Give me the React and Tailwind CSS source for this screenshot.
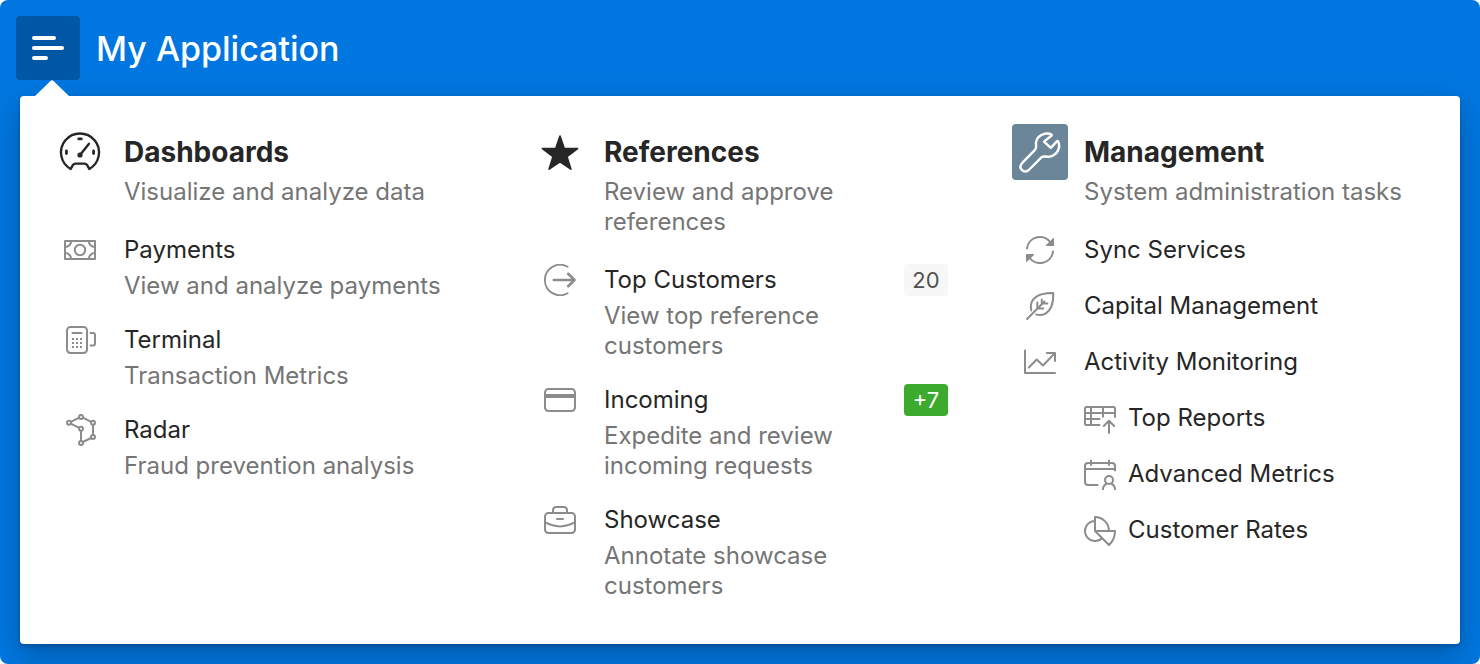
const glyphs = {
  gauge: (
    <>
      <path d="M18.7 45 A19 19 0 1 1 37.3 45 L35.2 41.2 Q34.2 39.6 32.4 39.6 H23.6 Q21.8 39.6 20.8 41.2 Z" strokeWidth="2.4" />
      <path d="M28 31 L37 19.8" strokeWidth="2.4" />
      <circle cx="28" cy="31" r="2.6" fill="currentColor" stroke="none" />
      <path d="M26.7 14.9 H29.3 M14.4 27 V29.6 M41.6 27 V29.6" strokeWidth="2.8" />
    </>
  ),
  star: (
    <path
      d="M28 12 L32.2 24.2 L45.6 24.6 L35 32.5 L38.9 45.2 L28 37.8 L17.1 45.2 L21 32.5 L10.4 24.6 L23.8 24.2 Z"
      fill="currentColor"
      strokeWidth="1.6"
    />
  ),
  wrench: (
    <path
      d="M39.6 10.6 C34.5 7.8 25 11 24 18.5 C23.8 21.5 25 23.6 23 25.8 L10 39.2 C5.6 44.4 12.2 50.2 16.8 46 L29.4 33.4 C31.6 31.4 34 33 37 32.7 C44.5 31.8 49.2 24.4 46.2 17.4 C45.8 16.8 45.2 16.8 44.8 17.4 L38.8 23.9 L32 17.6 L39.4 11.8 Q40 11.2 39.6 10.6 Z"
      strokeWidth="2.4"
    />
  ),
  cash: (
    <>
      <path d="M1 7 H31 V25 H1 Z" />
      <circle cx="16" cy="16" r="5.2" />
      <path d="M7.2 7 A6 6 0 0 1 1 13 M24.8 7 A6 6 0 0 0 31 13 M7.2 25 A6 6 0 0 0 1 19 M24.8 25 A6 6 0 0 1 31 19" />
    </>
  ),
  terminal: (
    <>
      <rect x="3" y="3" width="20" height="26" rx="3.4" />
      <path d="M8.5 9 H17.5 M26.5 9 H29 Q31 9 31 11 V19.5 Q31 21.5 29 21.5 H26.5" />
      <path d="M8 15 H18 M8 19 H18 M8 23 H18" strokeDasharray="2 2" strokeLinecap="butt" />
    </>
  ),
  radar: (
    <>
      <path d="M6.8 7.8 L15.2 3.6 M18.8 3.6 L27.2 7.8 M29 10.7 V21 M27.2 24 L18.8 28 M17 27 V16.7 M15.2 13.8 L6.8 9.6" />
      {[[5, 8.7], [17, 2.9], [29, 8.7], [29, 23], [17, 29], [17, 14.7]].map(([x, y]) => (
        <circle key={`${x}-${y}`} cx={x} cy={y} r="2" />
      ))}
    </>
  ),
  exit: (
    <>
      <path d="M23.6 2.8 A15.2 15.2 0 1 0 23.6 29.2" strokeWidth="1.8" />
      <path d="M9.8 16 H29.5 M24.2 9.8 L30.5 16 L24.2 22.2" strokeWidth="2.6" />
    </>
  ),
  card: (
    <>
      <rect x="1" y="5" width="30" height="22" rx="3.4" />
      <path d="M1 12 H31" strokeWidth="4" strokeLinecap="butt" />
    </>
  ),
  briefcase: (
    <>
      <rect x="1" y="9" width="30" height="20" rx="3.4" />
      <path d="M9 9 V6.4 Q9 3 12.4 3 H19.6 Q23 3 23 6.4 V9 M13 15 H19 M1 18.2 Q16 26.6 31 18.2" />
    </>
  ),
  sync: (
    <>
      <path d="M3 14.4 A13.1 13.1 0 0 1 27 9 M29 17.6 A13.1 13.1 0 0 1 5 23" />
      <path d="M29.4 4.6 V11.5 H22.5 Z M2.6 27.4 V20.5 H9.5 Z" fill="currentColor" strokeWidth="1.2" />
    </>
  ),
  leaf: (
    <path d="M3 29 L20.5 11.5 M7.3 20.4 C5 10 12 2.8 29.2 3 C29.6 13 28 20 21 23.8 C18 25.2 15 25.2 12.2 24.4 M13.3 12.5 V18.6 H19.3 M17.8 9.5 V13.6 H23.4" />
  ),
  trend: (
    <path d="M1 4.5 V27 H31 M4.8 21.5 L12.7 13.5 L19 19.5 L30.6 7.4 M22.8 7 H31 V15" />
  ),
  tableUp: (
    <path d="M31 15 V6.5 Q31 5 29.5 5 H2.5 Q1 5 1 6.5 V21.5 Q1 23 2.5 23 H15.5 M1 11 H31 M1 17 H15.5 M7 5 V23 M19 5 V14.8 M25 31 V19 M19.8 24 L25 18.8 L30.2 24" />
  ),
  calendarUser: (
    <>
      <path d="M13.5 27 H4 Q1 27 1 24 V8 Q1 5 4 5 H28 Q31 5 31 8 V12.5 M1 11 H31 M7 2.5 V7 M25 2.5 V7" />
      <circle cx="25" cy="22" r="4" />
      <path d="M19 31.2 Q19 28 22.3 25.6 M31 31.2 Q31 28 27.7 25.6" />
    </>
  ),
  pie: (
    <path d="M11 17 V3 A14 14 0 0 1 25 17 H11 M11 7 A10 10 0 1 0 18.2 24 M11 17 H31 Q31 25.5 25 31 Z" />
  ),
};

const columns = [
  {
    title: "Dashboards",
    icon: "gauge",
    description: "Visualize and analyze data",
    items: [
      { title: "Payments", icon: "cash", description: "View and analyze payments" },
      { title: "Terminal", icon: "terminal", description: "Transaction Metrics" },
      { title: "Radar", icon: "radar", description: "Fraud prevention analysis" },
    ],
  },
  {
    title: "References",
    icon: "star",
    description: "Review and approve references",
    badges: true,
    items: [
      { title: "Top Customers", icon: "exit", description: "View top reference customers", badge: "20", badgeClass: "bg-[#f7f7f7] text-[#525252]" },
      { title: "Incoming", icon: "card", description: "Expedite and review incoming requests", badge: "+7", badgeClass: "bg-[#3caa2d] text-white" },
      { title: "Showcase", icon: "briefcase", description: "Annotate showcase customers" },
    ],
  },
  {
    title: "Management",
    icon: "wrench",
    iconClass: "rounded bg-[#6b8699] text-white",
    description: "System administration tasks",
    items: [
      { title: "Sync Services", icon: "sync" },
      { title: "Capital Management", icon: "leaf" },
      {
        title: "Activity Monitoring",
        icon: "trend",
        children: [
          { title: "Top Reports", icon: "tableUp" },
          { title: "Advanced Metrics", icon: "calendarUser" },
          { title: "Customer Rates", icon: "pie" },
        ],
      },
    ],
  },
];

function Icon({ name, size = 32 }) {
  return (
    <svg
      width={size}
      height={size}
      viewBox={`0 0 ${size} ${size}`}
      fill="none"
      stroke="currentColor"
      strokeWidth="2"
      strokeLinecap="round"
      strokeLinejoin="round"
      aria-hidden="true"
    >
      {glyphs[name]}
    </svg>
  );
}

function MenuItem({ item, reserveBadge }) {
  return (
    <li>
      <a href="#" className="flex min-h-14 gap-4 pt-3 pb-[11px]">
        <span className="flex h-8 w-14 shrink-0 justify-center text-[#8c8c8c]">
          <Icon name={item.icon} />
        </span>
        <span className="min-w-0 flex-1">
          <span className="block leading-8">{item.title}</span>
          {item.description && (
            <span className="mt-[5px] block leading-[30px] text-[#757575]">{item.description}</span>
          )}
        </span>
        {reserveBadge && (
          <span className="w-11 shrink-0">
            {item.badge && (
              <span className={`block h-8 rounded text-center text-[22px] leading-8 ${item.badgeClass}`}>{item.badge}</span>
            )}
          </span>
        )}
      </a>
      {item.children && (
        <ul className="pl-[72px]">
          {item.children.map((child) => (
            <li key={child.title}>
              <a href="#" className="flex gap-3 py-3 leading-8">
                <span className="shrink-0 text-[#8c8c8c]">
                  <Icon name={child.icon} />
                </span>
                {child.title}
              </a>
            </li>
          ))}
        </ul>
      )}
    </li>
  );
}

function MenuColumn({ column }) {
  return (
    <section className="px-8">
      <a href="#" className="flex gap-4 pb-[15px]">
        <span className={`size-14 shrink-0 ${column.iconClass || ""}`}>
          <Icon name={column.icon} size={56} />
        </span>
        <span className="min-w-0 flex-1 pt-3">
          <span className="block text-[28px] leading-8 font-bold">{column.title}</span>
          <span className="mt-[9px] block leading-[30px] text-[#757575]">{column.description}</span>
        </span>
        {column.badges && <span className="w-11 shrink-0" />}
      </a>
      <ul>
        {column.items.map((item) => (
          <MenuItem key={item.title} item={item} reserveBadge={column.badges} />
        ))}
      </ul>
    </section>
  );
}

export default function App() {
  return (
    <div className="bg-white font-['Inter',sans-serif]">
      <div className="rounded-lg bg-[#0077e0] px-5 pb-5">
        <header className="-ml-1 flex h-24 items-center gap-4">
          <button
            type="button"
            aria-label="Menu"
            aria-expanded="true"
            className="relative flex size-16 items-center justify-center rounded bg-[#0057a6] text-white"
          >
            <svg width="32" height="32" viewBox="0 0 32 32" stroke="currentColor" strokeWidth="4" strokeLinecap="round" aria-hidden="true">
              <path d="M2 6 H22 M2 16 H30 M2 26 H14" />
            </svg>
            <svg className="absolute top-16 left-[18px]" width="36" height="17" viewBox="0 0 36 17" fill="currentColor" aria-hidden="true">
              <path d="M1 17 V16 L16.5 0.9 Q18 -0.4 19.5 0.9 L35 16 V17 Z" />
            </svg>
          </button>
          <h1 className="text-[34px] font-medium text-white">My Application</h1>
        </header>
        <nav className="grid grid-cols-3 rounded bg-white pt-7 pb-8 text-2xl text-[#262626] shadow-[0_2px_4px_rgba(0,0,0,0.2),0_12px_32px_rgba(0,0,0,0.25)]">
          {columns.map((column) => (
            <MenuColumn key={column.title} column={column} />
          ))}
        </nav>
      </div>
    </div>
  );
}
